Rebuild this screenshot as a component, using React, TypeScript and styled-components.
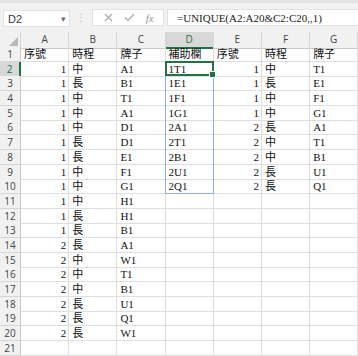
import React from 'react';
import styled, { createGlobalStyle } from 'styled-components';

const COL_W = 48.2;
const ROW_HEAD_W = 21;
const HEAD_H = 15;
const ROW_H = 14.7;

const columns = ['A', 'B', 'C', 'D', 'E', 'F', 'G'];

type CellValue = string | number | null;

const rows: CellValue[][] = [
  ['序號', '時程', '牌子', '補助欄', '序號', '時程', '牌子'],
  [1, '中', 'A1', '1T1', 1, '中', 'T1'],
  [1, '長', 'B1', '1E1', 1, '長', 'E1'],
  [1, '中', 'T1', '1F1', 1, '中', 'F1'],
  [1, '中', 'A1', '1G1', 1, '中', 'G1'],
  [1, '中', 'D1', '2A1', 2, '長', 'A1'],
  [1, '長', 'D1', '2T1', 2, '中', 'T1'],
  [1, '長', 'E1', '2B1', 2, '中', 'B1'],
  [1, '中', 'F1', '2U1', 2, '長', 'U1'],
  [1, '中', 'G1', '2Q1', 2, '長', 'Q1'],
  [1, '中', 'H1'],
  [1, '長', 'H1'],
  [1, '長', 'B1'],
  [2, '長', 'A1'],
  [2, '中', 'W1'],
  [2, '中', 'T1'],
  [2, '中', 'B1'],
  [2, '長', 'U1'],
  [2, '長', 'Q1'],
  [2, '長', 'W1'],
  [],
];

const App = () => {
  return (
    <Window>
      <GlobalStyle />
      <FormulaBar>
        <NameBox>
          <span>D2</span>
          <Caret>▾</Caret>
        </NameBox>
        <Grip>⋮</Grip>
        <FnBox>
          <svg width="9" height="9" viewBox="0 0 9 9">
            <path d="M1 1 L8 8 M8 1 L1 8" stroke="#a8a8a8" strokeWidth="1.1" fill="none" />
          </svg>
          <svg width="11" height="9" viewBox="0 0 11 9">
            <path d="M1 4.5 L4 7.5 L10 1" stroke="#a8a8a8" strokeWidth="1.2" fill="none" />
          </svg>
          <Fx>fx</Fx>
        </FnBox>
        <FormulaInput>=UNIQUE(A2:A20&amp;C2:C20,,1)</FormulaInput>
      </FormulaBar>
      <Sheet>
        <Row>
          <Corner>
            <svg width="9" height="9" viewBox="0 0 9 9">
              <path d="M9 0 L9 9 L0 9 Z" fill="#b8b8b8" />
            </svg>
          </Corner>
          {columns.map(col => (
            <ColHead key={col} $active={col === 'D'}>
              {col}
            </ColHead>
          ))}
        </Row>
        {rows.map((row, i) => (
          <Row key={i}>
            <RowHead $active={i === 1}>{i + 1}</RowHead>
            {columns.map((col, j) => {
              const v = row[j];
              return (
                <Cell key={col} $num={typeof v === 'number'}>
                  {v ?? ''}
                </Cell>
              );
            })}
          </Row>
        ))}
        <SpillRange />
        <Selection>
          <Handle />
        </Selection>
      </Sheet>
    </Window>
  );
};
export default App;

const GlobalStyle = createGlobalStyle`
  html, body {
    margin: 0;
    padding: 0;
    background: #ffffff;
    overflow: hidden;
  }
`;

const Window = styled.div`
  width: 358px;
  height: 356px;
  overflow: hidden;
  background: #ffffff;
`;

const FormulaBar = styled.div`
  display: flex;
  align-items: flex-start;
  box-sizing: border-box;
  height: 32px;
  padding: 6px 0 0 3px;
  background: #f1f1f1;
  border-top: 3px solid #e3e3e3;
`;

const NameBox = styled.div`
  display: flex;
  align-items: center;
  justify-content: space-between;
  box-sizing: border-box;
  width: 67px;
  height: 17px;
  margin-top: 1px;
  padding: 0 3px 0 4px;
  background: #ffffff;
  border: 1px solid #e2e2e2;
  font-family: 'Liberation Sans', Arial, sans-serif;
  font-size: 11px;
  color: #3a3a3a;
`;

const Caret = styled.span`
  font-size: 9px;
  color: #6e6e6e;
`;

const Grip = styled.div`
  width: 22px;
  height: 17px;
  line-height: 18px;
  text-align: center;
  font-family: 'DejaVu Sans', sans-serif;
  font-size: 10px;
  color: #c4c4c4;
`;

const FnBox = styled.div`
  display: flex;
  align-items: center;
  justify-content: space-around;
  box-sizing: border-box;
  width: 72px;
  height: 17px;
  padding: 0 4px 0 6px;
  background: #ffffff;
  border: 1px solid #e2e2e2;
`;

const Fx = styled.span`
  font-family: 'Liberation Serif', serif;
  font-style: italic;
  font-size: 11px;
  color: #9a9a9a;
`;

const FormulaInput = styled.div`
  flex: 1;
  box-sizing: border-box;
  height: 17px;
  margin-left: 3px;
  padding-left: 9px;
  background: #ffffff;
  border: 1px solid #e2e2e2;
  border-right: none;
  font-family: 'Liberation Serif', 'Noto Sans CJK TC', serif;
  font-size: 11px;
  line-height: 16px;
  color: #222222;
  white-space: nowrap;
`;

const Sheet = styled.div`
  position: relative;
`;

const Row = styled.div`
  display: grid;
  grid-template-columns: ${ROW_HEAD_W}px repeat(7, ${COL_W}px);
  height: ${ROW_H}px;
  &:first-child {
    height: ${HEAD_H}px;
  }
`;

const Corner = styled.div`
  display: flex;
  align-items: flex-end;
  justify-content: flex-end;
  box-sizing: border-box;
  padding: 0 2px 2px 0;
  background: #f1f1f1;
  border-right: 1px solid #d6d6d6;
  border-bottom: 1px solid #c8c8c8;
`;

const ColHead = styled.div<{ $active?: boolean }>`
  box-sizing: border-box;
  text-align: center;
  font-family: 'Open Sans', 'Liberation Sans', sans-serif;
  font-size: 10px;
  line-height: 15px;
  color: ${p => (p.$active ? '#217346' : '#444444')};
  background: ${p => (p.$active ? '#d8d8d8' : '#f1f1f1')};
  border-right: 1px solid #d6d6d6;
  border-bottom: ${p => (p.$active ? '2px solid #217346' : '1px solid #c8c8c8')};
`;

const RowHead = styled.div<{ $active?: boolean }>`
  box-sizing: border-box;
  text-align: center;
  font-family: 'Open Sans', 'Liberation Sans', sans-serif;
  font-size: 10px;
  line-height: 14px;
  color: ${p => (p.$active ? '#217346' : '#444444')};
  background: ${p => (p.$active ? '#d8d8d8' : '#f1f1f1')};
  border-right: ${p => (p.$active ? '2px solid #217346' : '1px solid #c8c8c8')};
  border-bottom: 1px solid #d6d6d6;
`;

const Cell = styled.div<{ $num?: boolean }>`
  box-sizing: border-box;
  overflow: hidden;
  white-space: nowrap;
  padding: ${p => (p.$num ? '0 2px 0 0' : '0 0 0 3px')};
  text-align: ${p => (p.$num ? 'right' : 'left')};
  font-family: 'Liberation Serif', 'Noto Sans CJK TC', serif;
  font-size: 11px;
  line-height: 14px;
  color: #111111;
  border-right: 1px solid #dedede;
  border-bottom: 1px solid #dedede;
`;

const SpillRange = styled.div`
  position: absolute;
  left: ${ROW_HEAD_W + COL_W * 3 - 1}px;
  top: ${HEAD_H + ROW_H - 1}px;
  width: ${COL_W + 1}px;
  height: ${ROW_H * 9 + 1}px;
  box-sizing: border-box;
  border: 1px solid #8eaee2;
  pointer-events: none;
`;

const Selection = styled.div`
  position: absolute;
  left: ${ROW_HEAD_W + COL_W * 3 - 1}px;
  top: ${HEAD_H + ROW_H - 1}px;
  width: ${COL_W + 1}px;
  height: ${ROW_H + 1}px;
  box-sizing: border-box;
  border: 2px solid #217346;
  pointer-events: none;
`;

const Handle = styled.div`
  position: absolute;
  right: -4px;
  bottom: -4px;
  width: 5px;
  height: 5px;
  background: #217346;
  border: 1px solid #ffffff;
`;
